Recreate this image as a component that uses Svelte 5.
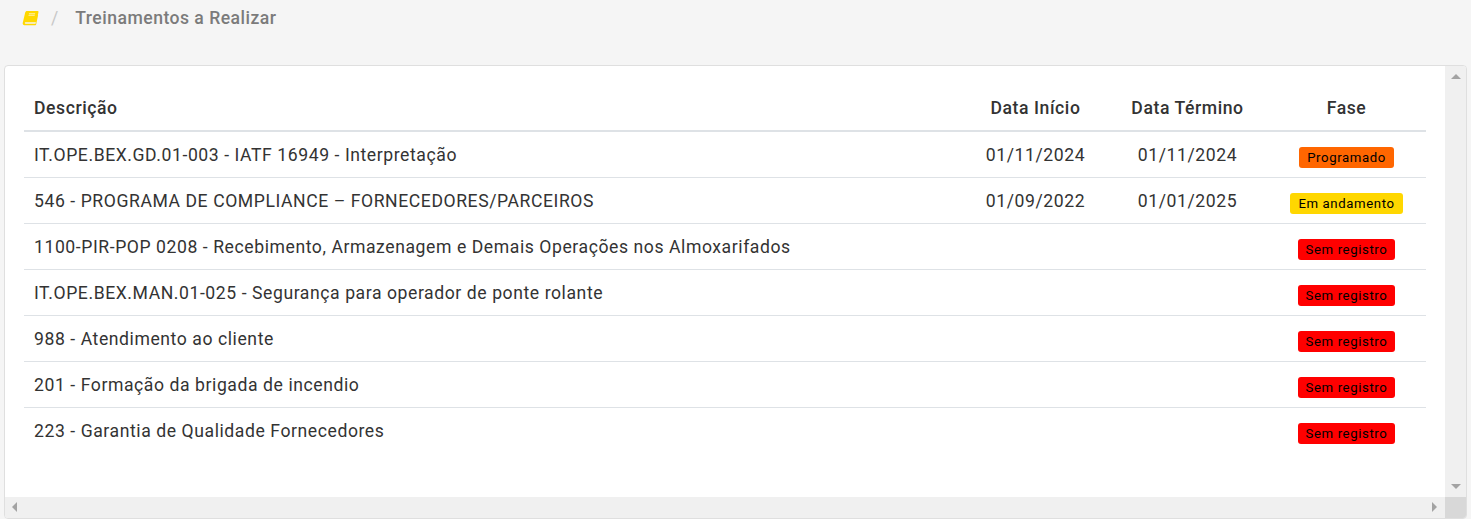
<script>
  const rows = [
    { d: 'IT.OPE.BEX.GD.01-003 - IATF 16949 - Interpretação', i: '01/11/2024', t: '01/11/2024', f: 'Programado', c: 'orange' },
    { d: '546 - PROGRAMA DE COMPLIANCE – FORNECEDORES/PARCEIROS', i: '01/09/2022', t: '01/01/2025', f: 'Em andamento', c: 'yellow' },
    { d: '1100-PIR-POP 0208 - Recebimento, Armazenagem e Demais Operações nos Almoxarifados', i: '', t: '', f: 'Sem registro', c: 'red' },
    { d: 'IT.OPE.BEX.MAN.01-025 - Segurança para operador de ponte rolante', i: '', t: '', f: 'Sem registro', c: 'red' },
    { d: '988 - Atendimento ao cliente', i: '', t: '', f: 'Sem registro', c: 'red' },
    { d: '201 - Formação da brigada de incendio', i: '', t: '', f: 'Sem registro', c: 'red' },
    { d: '223 - Garantia de Qualidade Fornecedores', i: '', t: '', f: 'Sem registro', c: 'red' }
  ];
</script>

<div class="page">
  <nav class="crumbs">
    <svg class="book" viewBox="0 0 17 16" width="17" height="16" aria-hidden="true">
      <path fill="#ffd800" d="M5 1h10.6c.6 0 1 .5.9 1.1l-2 9.2c-.1.6-.5.9-1 .9H3.8c-.7 0-1 .4-1 .8s.3.8.9.8h9.2c.4 0 .7-.2.8-.6l1.8-8.4.6.4-1.9 9c-.1.6-.6 1-1.2 1H2.4c-1.1 0-1.9-1-1.7-2.1L3.2 2.6C3.4 1.7 4.1 1 5 1z"/>
      <path fill="#fff" d="M7 3.6h6.2l-.15.7H6.85zM6.6 5.4h6.2l-.15.7H6.45z"/>
    </svg>
    <span class="sep">/</span>
    <span class="current">Treinamentos a Realizar</span>
  </nav>

  <section class="card">
    <div class="content">
      <table>
        <thead>
          <tr>
            <th class="left">Descrição</th>
            <th class="ci">Data Início</th>
            <th class="ct">Data Término</th>
            <th class="cf">Fase</th>
          </tr>
        </thead>
        <tbody>
          {#each rows as r}
            <tr>
              <td class="left">{r.d}</td>
              <td class="date">{r.i}</td>
              <td class="date">{r.t}</td>
              <td class="phase"><span class="badge {r.c}">{r.f}</span></td>
            </tr>
          {/each}
        </tbody>
      </table>
    </div>
    <div class="vbar">
      <span class="arrow up"></span>
      <span class="arrow down"></span>
    </div>
    <div class="hbar">
      <span class="arrow lt"></span>
      <span class="arrow rt"></span>
    </div>
    <div class="corner"></div>
  </section>
</div>

<style>
  :global(body) {
    margin: 0;
    background: #f5f5f5;
    font-family: Roboto, "Liberation Sans", sans-serif;
  }
  .page {
    height: 519px;
    box-sizing: border-box;
    padding: 0 4px;
    display: flex;
    flex-direction: column;
    overflow: hidden;
  }
  .crumbs {
    height: 65px;
    flex: none;
    box-sizing: border-box;
    display: flex;
    align-items: flex-start;
    padding: 8px 0 0 18px;
    font-size: 17.6px;
    line-height: 21px;
    font-weight: 500;
    color: #7b7b7b;
  }
  .book { margin-top: 2px; }
  .sep {
    margin-left: 12px;
    font-weight: 400;
    color: #c8c8c8;
  }
  .current { margin-left: 17px; letter-spacing: 0.47px; }
  .card {
    flex: 1;
    min-height: 0;
    display: grid;
    grid-template-columns: 1fr 21px;
    grid-template-rows: 1fr 21px;
    background: #fff;
    border: 1px solid #dfdfdf;
    border-radius: 4px;
    overflow: hidden;
  }
  .content { padding: 19px 19px 0; min-width: 0; }
  table {
    width: 100%;
    border-collapse: collapse;
    table-layout: fixed;
    color: #333;
    font-size: 17.6px;
    letter-spacing: 0.57px;
  }
  th {
    height: 46px;
    box-sizing: border-box;
    padding: 0;
    font-weight: 500;
    border-bottom: 2px solid #dee2e6;
    color: #333;
    text-align: center;
    vertical-align: middle;
  }
  .ci { width: 144px; }
  .ct { width: 160px; }
  .cf { width: 159px; }
  th.left, td.left { text-align: left; padding-left: 10px; }
  td {
    height: 46px;
    box-sizing: border-box;
    padding: 1px 0 0;
    border-bottom: 1px solid #dee2e6;
    vertical-align: middle;
  }
  tbody tr:last-child td { border-bottom: 0; }
  td.date, th.ci, th.ct { text-align: center; padding-left: 1px; }
  td.phase { text-align: center; padding: 6px 0 0; }
  .badge {
    display: inline-block;
    padding: 0 8px;
    height: 21px;
    line-height: 21px;
    font-size: 13.2px;
    letter-spacing: 0.6px;
    border-radius: 3px;
    color: #000;
    vertical-align: middle;
  }
  .orange { background: #ff6600; }
  .yellow { background: #ffd700; }
  .red { background: #ff0000; }
  .vbar, .hbar { background: #f0f0f0; position: relative; }
  .corner { background: #d8d8d8; }
  .arrow { position: absolute; width: 0; height: 0; border-style: solid; border-color: transparent; }
  .up { top: 8px; left: 6px; border-width: 0 5px 5px; border-bottom-color: #a3a3a3; }
  .down { bottom: 8px; left: 6px; border-width: 5px 5px 0; border-top-color: #a3a3a3; }
  .lt { left: 7px; top: 5px; border-width: 5px 5px 5px 0; border-right-color: #a3a3a3; }
  .rt { right: 8px; top: 5px; border-width: 5px 0 5px 5px; border-left-color: #a3a3a3; }
</style>
